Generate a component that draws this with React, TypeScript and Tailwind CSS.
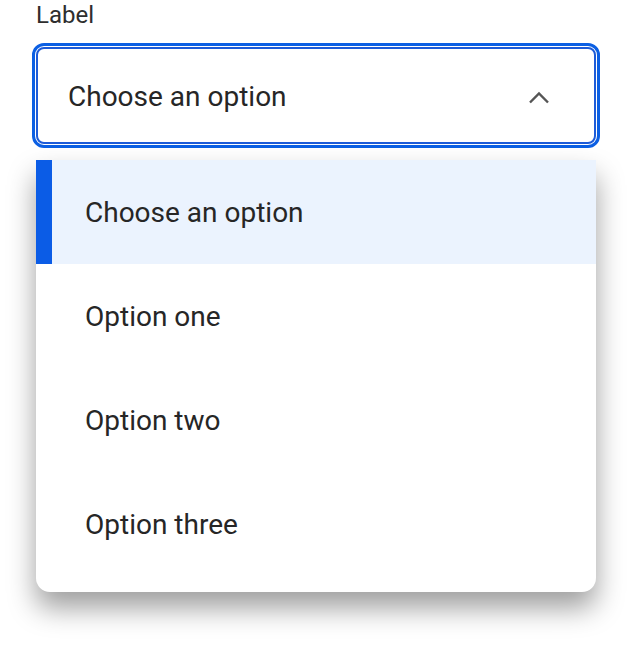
import React, { useState } from 'react';

const options = ['Choose an option', 'Option one', 'Option two', 'Option three'];

function ChevronUp() {
  return (
    <svg width="22" height="13" viewBox="0 0 22 13" fill="none" className="text-[#555]">
      <path d="M2 11.5L11 2.5L20 11.5" stroke="currentColor" strokeWidth="2.4" />
    </svg>
  );
}

export default function App() {
  const [selected] = useState(0);

  return (
    <div className="min-h-[652px] bg-white pl-9 pr-9 font-['Roboto',sans-serif]">
      <label className="block text-[24px] leading-[30px] text-[#2e2e2e]">Label</label>
      <button
        type="button"
        className="mt-[17px] flex h-[97px] w-[560px] items-center justify-between rounded-[8px] border-2 border-[#1d5bd8] bg-white pl-[30px] pr-[44px] pt-[3px] text-left text-[28px] text-[#262626] outline outline-[3px] outline-offset-[1px] outline-[#0b5fe3]"
      >
        <span>Choose an option</span>
        <ChevronUp />
      </button>
      <ul className="mt-4 w-[560px] overflow-hidden rounded-b-[14px] bg-white pb-4 shadow-[0_16px_28px_rgba(0,0,0,0.38)]">
        {options.map((opt, i) => (
          <li
            key={opt}
            className={
              i === selected
                ? 'flex h-[104px] items-center border-l-[16px] border-[#0b5ce6] bg-[#ebf3fe] pl-[33px] pt-[2px] text-[28px] text-[#262626]'
                : 'flex h-[104px] items-center pl-[49px] pt-[2px] text-[28px] text-[#262626]'
            }
          >
            {opt}
          </li>
        ))}
      </ul>
    </div>
  );
}
